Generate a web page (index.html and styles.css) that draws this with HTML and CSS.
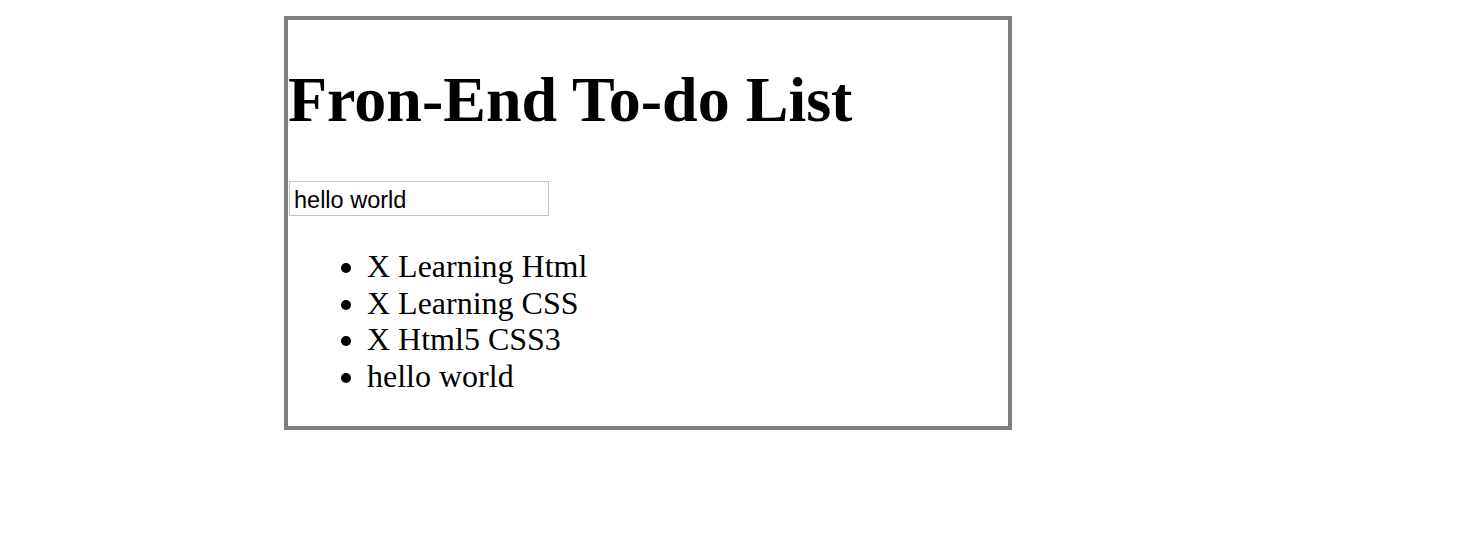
FILE: index.html
```html
<!DOCTYPE html>
<html>
<head>
<meta charset="utf-8">
<title>Fron-End To-do List</title>
<link rel="stylesheet" href="styles.css">
</head>
<body>
<div class="todo">
  <h1 class="todo-title">Fron-End To-do List</h1>
  <input class="todo-input" type="text" value="hello world">
  <ul class="todo-list">
    <li class="todo-item">X Learning Html</li>
    <li class="todo-item">X Learning CSS</li>
    <li class="todo-item">X Html5 CSS3</li>
    <li class="todo-item">hello world</li>
  </ul>
</div>
</body>
</html>
```
FILE: styles.css
```css
body {
  margin: 8px;
  font-family: "Liberation Serif", "Times New Roman", serif;
  color: #000;
  background: #fff;
}

.todo {
  margin: 8px 0 0 276px;
  width: 720px;
  height: 406px;
  border: 4px solid #808080;
}

.todo-title {
  font-size: 64px;
  font-weight: bold;
  margin: 43px 0 44px;
  line-height: 74px;
}

.todo-input {
  display: block;
  box-sizing: border-box;
  width: 260px;
  height: 35px;
  margin: 0 0 0 1px;
  padding: 3px 3px 0 4px;
  border: 1px solid #c2c2c2;
  font-family: "Liberation Sans", Arial, sans-serif;
  font-size: 23.5px;
  color: #000;
  outline: none;
}

.todo-list {
  font-size: 32px;
  margin: 32px 0 0;
  padding-left: 79px;
  line-height: 36.5px;
}
```
